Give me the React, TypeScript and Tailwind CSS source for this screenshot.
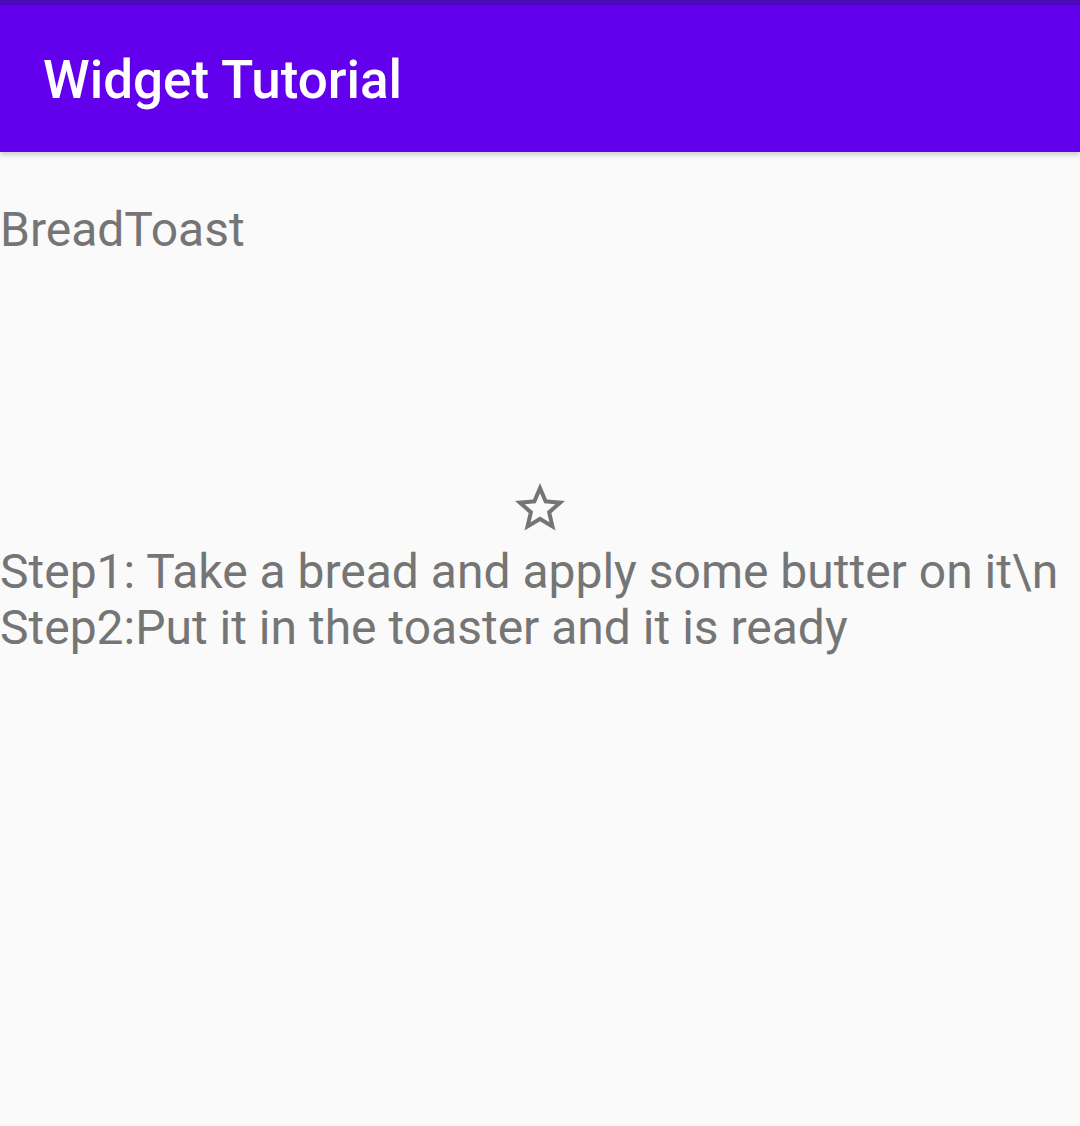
export default function App() {
  return (
    <div
      className="min-h-[1126px] bg-[#fafafa] text-[#757575]"
      style={{ fontFamily: "Roboto, 'Noto Sans', sans-serif" }}
    >
      <div className="h-[5px] bg-[#4b0bbd]" />
      <header className="h-[147px] bg-[#6200ee] flex items-center px-[43px] pt-[4px] shadow-[0_3px_5px_rgba(0,0,0,0.18)]">
        <h1 className="text-white text-[53px] font-medium leading-none">Widget Tutorial</h1>
      </header>
      <main className="pt-[48px]">
        <p className="text-[48px] leading-[60px]">BreadToast</p>
        <div className="mt-[218px] flex flex-col items-center">
          <svg viewBox="0 0 24 24" className="w-[60px] h-[60px] fill-[#757575]">
            <path d="M22 9.24l-7.19-.62L12 2 9.19 8.63 2 9.24l5.46 4.73L5.82 21 12 17.27 18.18 21l-1.63-7.03L22 9.24zM12 15.4l-3.76 2.27 1-4.28-3.32-2.88 4.38-.38L12 6.1l1.71 4.04 4.38.38-3.32 2.88 1 4.28L12 15.4z" />
          </svg>
        </div>
        <p className="mt-[6px] text-[48px] leading-[56px] w-full">
          Step1: Take a bread and apply some butter on it\n
          <br />
          Step2:Put it in the toaster and it is ready
        </p>
      </main>
    </div>
  );
}
